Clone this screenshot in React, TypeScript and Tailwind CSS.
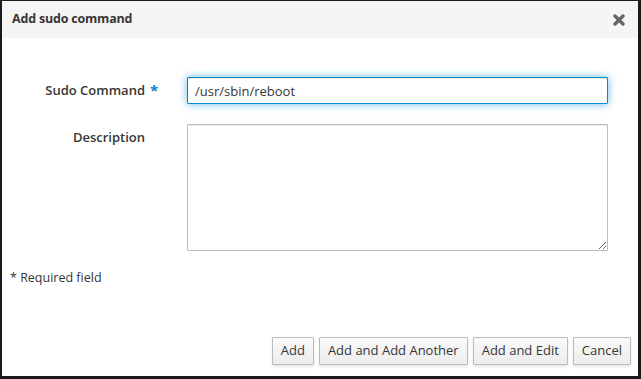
import React from 'react';

function CloseIcon() {
  return (
    <svg width="12" height="12" viewBox="0 0 12 12" className="text-[#666666]">
      <path d="M2 2 L10 10 M10 2 L2 10" stroke="currentColor" strokeWidth="3.4" strokeLinecap="round" />
    </svg>
  );
}

function Btn({ children }: { children: React.ReactNode }) {
  return (
    <button className="h-[28px] px-[8px] border border-[#bbbbbb] rounded-[1px] bg-gradient-to-b from-[#fafafa] to-[#ededed] text-[13px] text-[#363636] shadow-[0_2px_3px_rgba(3,3,3,0.1)]">
      {children}
    </button>
  );
}

export default function App() {
  return (
    <div
      className="w-[641px] h-[379px] bg-white border-l-2 border-t border-r-[3px] border-b-[3px] border-[#1a1a1a] flex flex-col text-[#363636]"
      style={{ fontFamily: '"Open Sans", "Noto Sans", sans-serif' }}
    >
      <header className="h-[37px] shrink-0 bg-[#f5f5f5] pl-[10px] pr-[13px] flex items-center justify-between">
        <h1 className="text-[12.5px] font-bold tracking-[-0.2px] text-[#363636]">Add sudo command</h1>
        <CloseIcon />
      </header>

      <div className="flex-1 flex flex-col">
        <div className="pt-[39px] flex flex-col gap-[20px]">
          <div className="flex items-center">
            <label className="w-[143px] shrink-0 text-right text-[13px] font-semibold relative">
              Sudo Command
              <span className="absolute left-[148px] top-[-2px] text-[#0088ce] text-[15px] font-bold">*</span>
            </label>
            <input
              readOnly
              value="/usr/sbin/reboot"
              className="ml-[42px] w-[421px] h-[27px] px-[7px] text-[13px] border border-[#0088ce] rounded-[1px] outline-none shadow-[inset_0_1px_1px_rgba(3,3,3,0.075),0_0_8px_rgba(0,136,206,0.6)] text-[#363636]"
            />
          </div>
          <div className="flex items-start">
            <label className="w-[143px] shrink-0 text-right text-[13px] font-semibold pt-[4px]">Description</label>
            <textarea className="ml-[42px] w-[421px] h-[127px] border border-[#bbbbbb] rounded-[1px] outline-none shadow-[inset_0_1px_1px_rgba(3,3,3,0.075)]" />
          </div>
        </div>
        <p className="pl-[8px] pt-[18px] text-[12.5px]">* Required field</p>
        <div className="mt-auto mb-[11px] pr-[7px] flex justify-end gap-[5px]">
          <Btn>Add</Btn>
          <Btn>Add and Add Another</Btn>
          <Btn>Add and Edit</Btn>
          <Btn>Cancel</Btn>
        </div>
      </div>
    </div>
  );
}
